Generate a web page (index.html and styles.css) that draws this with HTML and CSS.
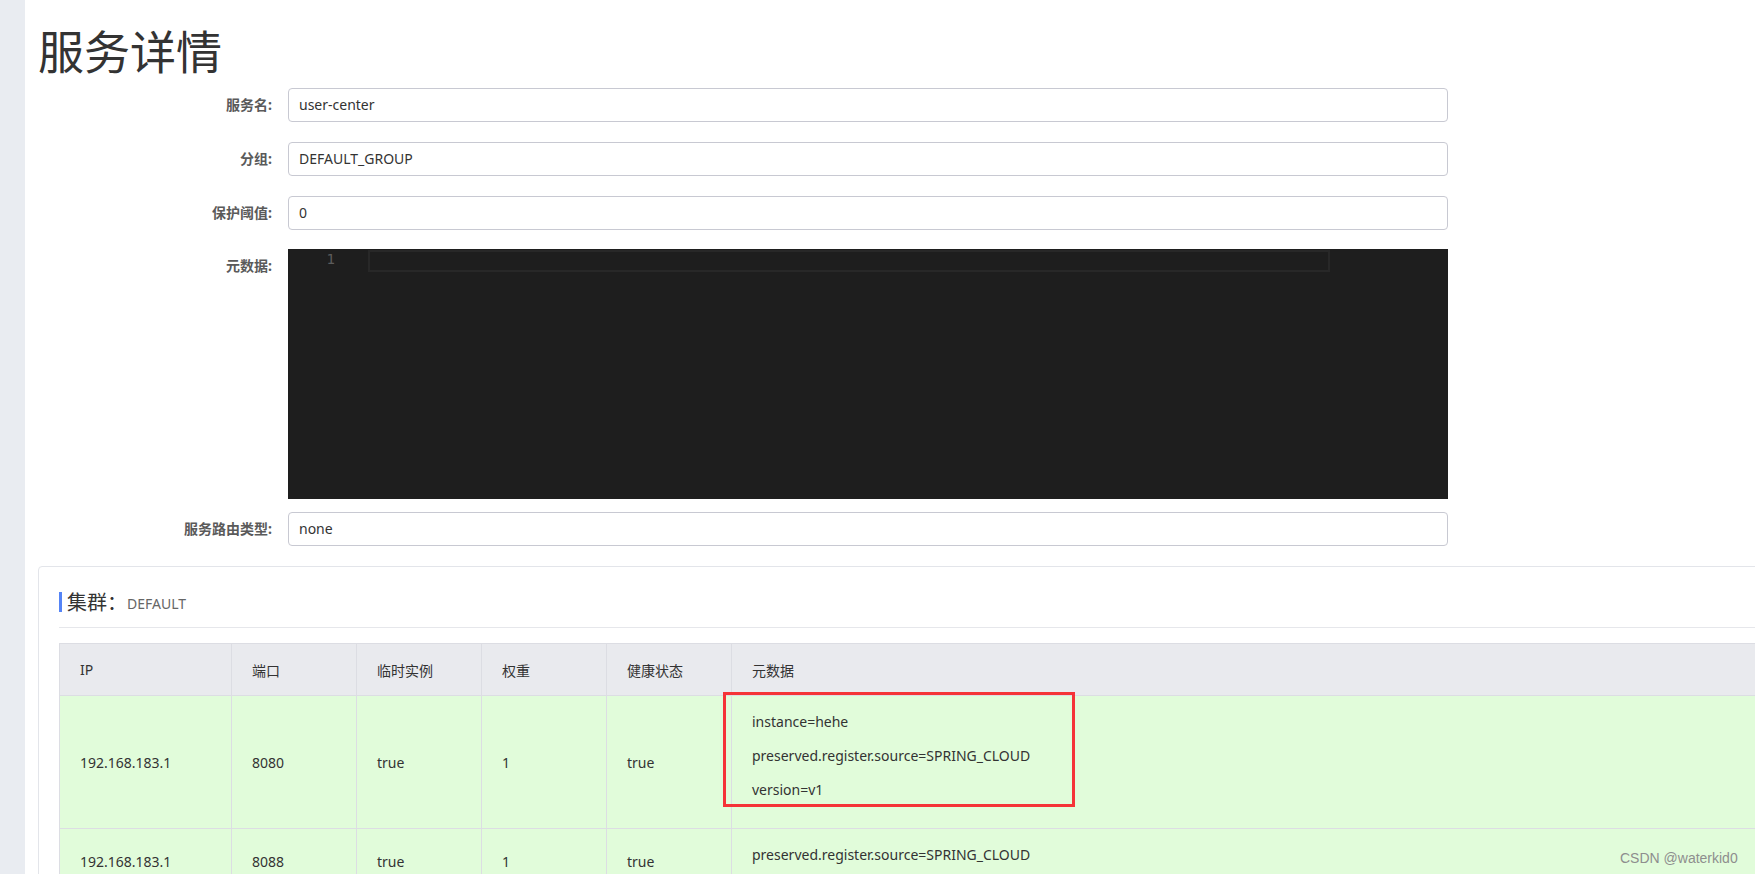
FILE: index.html
```html
<!DOCTYPE html>
<html lang="zh-CN">
<head>
<meta charset="utf-8">
<title>服务详情</title>
<link rel="stylesheet" href="styles.css">
</head>
<body>
<div class="layout">
  <aside class="sidebar"></aside>
  <main class="main">
    <h1 class="page-title">服务详情</h1>
    <div class="form">
      <div class="form-item">
        <div class="form-label">服务名:</div>
        <div class="input">user-center</div>
      </div>
      <div class="form-item">
        <div class="form-label">分组:</div>
        <div class="input">DEFAULT_GROUP</div>
      </div>
      <div class="form-item form-item-tight">
        <div class="form-label">保护阈值:</div>
        <div class="input">0</div>
      </div>
      <div class="form-item form-item-editor">
        <div class="form-label">元数据:</div>
        <div class="editor">
          <div class="editor-gutter"><span class="line-no">1</span></div>
          <div class="editor-content"><div class="current-line"></div></div>
        </div>
      </div>
      <div class="form-item">
        <div class="form-label">服务路由类型:</div>
        <div class="input">none</div>
      </div>
    </div>

    <section class="card">
      <div class="card-head">
        <div class="cluster-title"><span class="cluster-label">集群：</span><span class="cluster-name">DEFAULT</span></div>
      </div>
      <table class="instances">
        <colgroup>
          <col class="col-ip">
          <col class="col-sm">
          <col class="col-sm">
          <col class="col-sm">
          <col class="col-sm">
          <col>
        </colgroup>
        <thead>
          <tr><th>IP</th><th>端口</th><th>临时实例</th><th>权重</th><th>健康状态</th><th>元数据</th></tr>
        </thead>
        <tbody>
          <tr>
            <td>192.168.183.1</td><td>8080</td><td>true</td><td>1</td><td>true</td>
            <td class="meta"><div class="meta-line">instance=hehe</div><div class="meta-line">preserved.register.source=SPRING_CLOUD</div><div class="meta-line">version=v1</div></td>
          </tr>
          <tr>
            <td>192.168.183.1</td><td>8088</td><td>true</td><td>1</td><td>true</td>
            <td class="meta"><div class="meta-line">preserved.register.source=SPRING_CLOUD</div></td>
          </tr>
        </tbody>
      </table>
    </section>
  </main>
</div>
<div class="annotation"></div>
<div class="watermark">CSDN @waterkid0</div>
</body>
</html>
```

FILE: styles.css
```css
html, body {
  margin: 0;
  padding: 0;
  width: 1755px;
  height: 874px;
  overflow: hidden;
  background: #ffffff;
  font-family: "Noto Sans", "Noto Sans CJK SC", sans-serif;
  color: #333333;
}

.layout {
  display: flex;
  min-height: 874px;
}

.sidebar {
  flex: 0 0 25px;
  background: #e9ecf1;
}

.main {
  flex: 0 0 auto;
  padding-left: 13px;
}

.page-title {
  margin: 26px 0 16px;
  font-family: "Noto Sans CJK SC", sans-serif;
  font-size: 46px;
  line-height: 46px;
  font-weight: 400;
  color: #333333;
}

.form {
  display: flex;
  flex-direction: column;
}

.form-item {
  display: flex;
  align-items: flex-start;
  column-gap: 16px;
  margin-bottom: 20px;
}

.form-item-tight {
  margin-bottom: 19px;
}

.form-item-editor {
  margin-bottom: 13px;
}

.form-label {
  width: 234px;
  text-align: right;
  font-size: 14px;
  line-height: 34px;
  font-weight: 700;
  color: #5a5a5a;
}

.input {
  box-sizing: border-box;
  width: 1160px;
  height: 34px;
  border: 1px solid #c8c9d2;
  border-radius: 4px;
  padding: 0 10px;
  font-size: 14px;
  line-height: 32px;
  color: #333333;
}

.editor {
  display: flex;
  width: 1160px;
  height: 250px;
  background: #1e1e1e;
}

.editor-gutter {
  flex: 0 0 80px;
}

.line-no {
  display: block;
  width: 47px;
  text-align: right;
  font-family: "DejaVu Sans Mono", monospace;
  font-size: 14px;
  line-height: 20px;
  color: #5c5c5c;
}

.editor-content {
  flex: 1;
  padding-top: 1px;
}

.current-line {
  box-sizing: border-box;
  width: 962px;
  height: 22px;
  border: 2px solid #282828;
}

.card {
  box-sizing: border-box;
  width: 1760px;
  border: 1px solid #e3e5ea;
  border-radius: 4px;
  padding: 25px 20px 20px;
}

.card-head {
  padding-bottom: 15px;
  border-bottom: 1px solid #e6e7eb;
  margin-bottom: 15px;
}

.cluster-title {
  display: flex;
  align-items: center;
  border-left: 3px solid #5584f6;
  padding-left: 5px;
  height: 20px;
  line-height: 20px;
}

.cluster-label {
  font-family: "Noto Sans CJK SC", sans-serif;
  font-size: 20px;
  color: #333333;
}

.cluster-name {
  font-size: 14px;
  color: #666666;
  padding-top: 3px;
}

.instances {
  width: 100%;
  border-collapse: collapse;
  table-layout: fixed;
  font-size: 14px;
  color: #333333;
}

.col-ip { width: 172px; }
.col-sm { width: 125px; }

.instances th,
.instances td {
  border: 1px solid #dcdde3;
  text-align: left;
  padding: 0 20px;
}

.instances th {
  height: 51px;
  background: #e9eaee;
  font-weight: 400;
}

.instances td {
  background: #e1fcda;
  vertical-align: middle;
}

.instances td.meta {
  padding: 16px 20px 14px;
}

.meta-line {
  line-height: 20px;
  margin-bottom: 14px;
}

.annotation {
  position: absolute;
  left: 723px;
  top: 692px;
  width: 346px;
  height: 109px;
  border: 3px solid #f53337;
}

.watermark {
  position: absolute;
  left: 1620px;
  top: 848px;
  font-family: "Liberation Sans", sans-serif;
  font-size: 14px;
  line-height: 20px;
  color: #8e8e8e;
}
```
